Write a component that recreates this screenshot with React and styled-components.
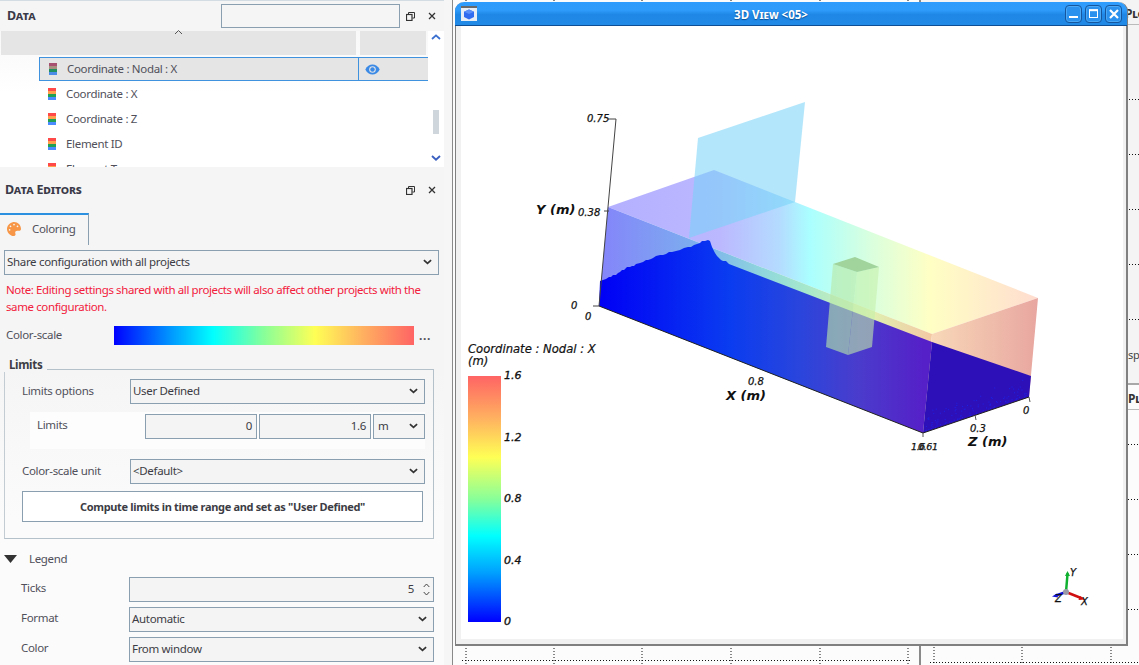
import React from "react";
import styled, { createGlobalStyle } from "styled-components";
import { FaPalette } from "react-icons/fa";

const UI = `"Noto Sans", "Liberation Sans", sans-serif`;
const VTK = `"DejaVu Sans", "Liberation Sans", sans-serif`;
const FIELD = "#8a9fb0";

const Global = createGlobalStyle`
  html, body { margin: 0; padding: 0; background: #f5f5f5; }
  * { box-sizing: border-box; }
`;

const Root = styled.div`
  position: relative;
  width: 1139px;
  height: 665px;
  overflow: hidden;
  display: flex;
  font: 11.5px/1 ${UI};
  letter-spacing: -0.32px;
  color: #3c3c44;
  background: #f6f6f6;
`;

const Dock = styled.aside`
  width: 444px;
  height: 665px;
  flex: none;
  display: flex;
  flex-direction: column;
  background: #f5f5f5;
  border-top: 1px solid #d3dbe3;
`;

const DockHead = styled.header`
  display: flex;
  align-items: center;
  height: ${(p) => p.$h}px;
  padding: ${(p) => p.$pt}px 0 0 ${(p) => p.$pl}px;
  flex: none;
`;

const DockTitle = styled.h2`
  margin: 1px 0 0;
  flex: 1;
  font: 700 12.5px/1 ${UI};
  letter-spacing: -0.2px;
  font-variant: small-caps;
  color: #3a3a48;
`;

const Search = styled.div`
  width: 179px;
  height: 24px;
  border: 1px solid ${FIELD};
  background: #f5f5f5;
`;

const HeadBtn = styled.button`
  width: 22px;
  height: 22px;
  padding: 0;
  border: 0;
  background: none;
  display: flex;
  align-items: center;
  justify-content: center;
  color: #333;
`;

const HeadBtns = styled.div`
  display: flex;
  width: 44px;
  padding-right: 1px;
`;

const TreeWrap = styled.section`
  height: 136px;
  flex: none;
  display: flex;
  background: linear-gradient(#f8f8f8, #ffffff 45%);
`;

const TreeMain = styled.div`
  width: 428px;
  height: 136px;
  clip-path: inset(-4px 0 0 0);
`;

const TreeHeader = styled.div`
  position: relative;
  display: grid;
  grid-template-columns: 355px 66px;
  gap: 4px;
  height: 24px;
  padding-left: 1px;
`;

const HeaderCell = styled.div`
  background: #e5e5e5;
`;

const SortCaret = styled.svg`
  position: absolute;
  left: 174px;
  top: -2px;
`;

const TreeRow = styled.div`
  display: flex;
  align-items: center;
  height: ${(p) => (p.$selected ? 24 : 25)}px;
  margin: ${(p) => (p.$selected ? "2px 0 0 39px" : "0 0 0 48px")};
  padding-left: ${(p) => (p.$selected ? 9 : 0)}px;
  background: ${(p) => (p.$selected ? "#e5e5e5" : "transparent")};
  border: ${(p) => (p.$selected ? "1px solid #3f93de" : "0")};
  border-right: 0;
  gap: 10px;
  color: #50505a;
`;

const RowName = styled.span`
  width: 281px;
  white-space: nowrap;
  padding-bottom: ${(p) => (p.$selected ? 1 : 0)}px;
`;

const EyeCell = styled.span`
  align-self: stretch;
  flex: 1;
  display: flex;
  align-items: center;
  padding-left: 6px;
  border-left: 1px solid #3f93de;
`;

const Stack = styled.span`
  width: 8px;
  height: 12px;
  flex: none;
  display: grid;
  grid-template-rows: repeat(4, 3px);
`;

const Stripe = styled.i`
  display: block;
  background: ${(p) => p.$c};
`;

const ScrollBar = styled.div`
  width: 16px;
  height: 136px;
  background: #fff;
  display: flex;
  flex-direction: column;
  align-items: center;
  padding-top: 3px;
`;

const ScrollThumb = styled.div`
  width: 6px;
  height: 24px;
  margin: 70px 0 21px;
  background: #cfd6dc;
`;

const TabBar = styled.div`
  display: flex;
  height: 32px;
  margin-top: 6px;
  flex: none;
`;

const Tab = styled.div`
  width: 89px;
  display: flex;
  align-items: center;
  gap: 11px;
  padding: 0 0 3px 7px;
  border-top: 2px solid #2b90e0;
  border-right: 1px solid ${FIELD};
  color: #50505a;
`;

const EditorBody = styled.div`
  flex: 1;
  padding: 5px 5px 0 4px;
  background: linear-gradient(#f5f5f5 30%, #fbfbfb 65%);
`;

const Box = styled.div`
  display: flex;
  align-items: center;
  justify-content: ${(p) => (p.$num ? "flex-end" : "space-between")};
  height: 25px;
  width: ${(p) => (p.$w ? `${p.$w}px` : "auto")};
  padding: 0 ${(p) => (p.$num ? 4 : 6)}px 2px ${(p) => p.$pl ?? 2}px;
  border: 1px solid ${FIELD};
  background: #f4f4f4;
  color: #3c3c44;
  white-space: nowrap;
`;

const Note = styled.p`
  margin: 6px 0 0 2px;
  width: 425px;
  line-height: 17px;
  letter-spacing: -0.39px;
  color: #f2203c;
`;

const ScaleRow = styled.div`
  display: grid;
  grid-template-columns: 108px 300px auto;
  align-items: center;
  margin: 11px 0 0 2px;
  height: 19px;
  color: #50505a;
`;

const Ramp = styled.div`
  height: 19px;
  background: linear-gradient(90deg, #0000ff 0%, #00a0ff 20%, #00ffff 33%, #88ff99 50%, #ffff55 67%, #ffb060 83%, #ff6464 100%);
`;

const More = styled.span`
  margin-left: 5px;
  font-weight: 700;
  font-size: 12px;
  letter-spacing: 0.6px;
  padding-top: 1px;
`;

const Group = styled.fieldset`
  position: relative;
  width: 430px;
  min-width: 0;
  margin: 24px 0 0;
  padding: 9px 8px 16px 17px;
  border: 1px solid #b4c0ca;
  border-left-color: #c4ccd3;
`;

const GroupTitle = styled.legend`
  position: absolute;
  left: -1px;
  top: -13px;
  padding: 0 5px;
  font-weight: 700;
  line-height: 15px;
  color: #3c3c44;
  background: #f5f5f5;
`;

const Row = styled.div`
  display: grid;
  grid-template-columns: ${(p) => p.$cols || "108px 295px"};
  align-items: center;
  margin-top: ${(p) => p.$mt || 0}px;
`;

const Label = styled.span`
  color: #50505a;
  padding-bottom: ${(p) => p.$lift ?? 2}px;
`;

const SubPanel = styled.div`
  display: grid;
  grid-template-columns: 106px 112px 112px 52px;
  column-gap: 2px;
  align-items: center;
  height: 37px;
  margin: 8px 0 0 8px;
  padding: 2px 0 10px 7px;
  background: #fdfdfd;
`;

const ComputeBtn = styled.button`
  display: block;
  width: 401px;
  height: 31px;
  margin-top: 7px;
  padding-bottom: 2px;
  border: 1px solid ${FIELD};
  background: #fff;
  font: 700 11px/1 ${UI};
  letter-spacing: -0.33px;
  color: #3c3c44;
`;

const LegendHead = styled.div`
  display: flex;
  align-items: center;
  gap: 12px;
  height: 16px;
  margin-top: 12px;
  color: #50505a;
`;

const LegendRows = styled.div`
  display: grid;
  row-gap: 5px;
  margin: 10px 0 0 17px;
`;

const Spin = styled.span`
  display: grid;
  row-gap: 3px;
  margin: 2px -1px 0 9px;
`;

const Workspace = styled.main`
  flex: 1;
  display: flex;
  padding-left: 8px;
  height: 665px;
`;

const PlotPane = styled.section`
  width: 469px;
  height: 665px;
  flex: none;
  background: #fcfcfc;
  border-left: 1px solid #8a8a8a;
  border-right: 2px solid #8a8a8a;
`;

const PlotColumn = styled.div`
  flex: 1;
  display: grid;
  grid-template-rows: 383px 1fr;
`;

const SidePlot = styled.section`
  position: relative;
  background: ${(p) => p.$bg};
  border-top: ${(p) => (p.$ruled ? "2px solid #a8a8a8" : "0")};
  overflow: hidden;
`;

const SideTitle = styled.div`
  height: 25px;
  padding: 8px 0 0 ${(p) => p.$pl}px;
  font: 700 12px/1 ${UI};
  font-variant: small-caps;
  color: #333;
  white-space: nowrap;
  border-bottom: 1px solid #bbb;
`;

const Grid = styled.svg`
  display: block;
`;

const GridLine = styled.line`
  stroke: #111;
  stroke-width: 1;
  stroke-dasharray: 1 2;
`;

const GridText = styled.text`
  font: 11px ${UI};
  fill: #444;
`;

const Win = styled.div`
  position: absolute;
  left: 455px;
  top: 2px;
  width: 673px;
  height: 644px;
  display: flex;
  flex-direction: column;
  border-right: 2px solid #808080;
  border-bottom: 2px solid #808080;
  border-left: 1px solid #808080;
  border-radius: 9px 9px 0 0;
  background: #f1f1f1;
`;

const TitleBar = styled.div`
  display: flex;
  align-items: center;
  flex: none;
  height: 24px;
  margin: 0 -1px;
  padding: 0 5px 0 6px;
  border-radius: 9px 9px 0 0;
  border-bottom: 1px solid #0d4e94;
  background: linear-gradient(#2e9cfc, #2f9bfb 35%, #1f88e6 55%, #2189e6);
`;

const WinTitle = styled.div`
  flex: 1;
  padding-top: 2px;
  text-align: center;
  font: 700 11.5px/1 ${UI};
  letter-spacing: 0;
  font-variant: small-caps;
  color: #fff;
  text-shadow: 0 1px 1px #0b4f96;
`;

const WinButtons = styled.div`
  display: flex;
  gap: 3px;
`;

const WinButton = styled.button`
  width: 17px;
  height: 18px;
  padding: 0;
  display: flex;
  align-items: center;
  justify-content: center;
  border: 1px solid #15569e;
  border-radius: 4px;
  background: #2a92ee;
  box-shadow: inset 0 0 0 1px #4aa8f5;
`;

const WinBody = styled.div`
  flex: 1;
  padding: 0 4px 5px 5px;
  min-height: 0;
`;

const Viewport = styled.div`
  position: relative;
  width: 662px;
  height: 613px;
  background: #fff;
  overflow: hidden;
`;

const Scene = styled.svg`
  display: block;
`;

const AxisText = styled.text`
  font-family: ${VTK};
  font-style: italic;
  font-weight: ${(p) => (p.$big ? 700 : 400)};
  font-size: ${(p) => (p.$big ? 13 : p.$tight ? 9.5 : 10)}px;
  letter-spacing: ${(p) => (p.$tight ? -0.4 : 0)}px;
  fill: #111;
  stroke: #111;
  stroke-width: ${(p) => (p.$big ? 0 : 0.25)}px;
`;

const ColorLegend = styled.div`
  position: absolute;
  left: 7px;
  top: 317px;
  font: italic 11.6px/12px ${VTK};
  letter-spacing: 0;
  color: #111;
  -webkit-text-stroke: 0.2px #111;
`;

const LegendBody = styled.div`
  display: flex;
  gap: 3px;
  margin-top: 9px;
`;

const LegendRamp = styled.div`
  width: 33px;
  height: 246px;
  background: linear-gradient(0deg, #0000ff 0%, #00a0ff 20%, #00ffff 35%, #88ff99 50%, #ffff55 67%, #ffb060 83%, #ff6464 100%);
`;

const LegendTicks = styled.div`
  height: 258px;
  margin-top: -6px;
  display: flex;
  flex-direction: column;
  justify-content: space-between;
  font-size: 11px;
  line-height: 12px;
  -webkit-text-stroke: 0.35px #111;
`;

const Chevron = ({ color = "#333", w = 9 }) => (
  <svg width={w} height="6" viewBox="0 0 10 6" fill="none">
    <path d="M1 1l4 3.6L9 1" stroke={color} strokeWidth="1.9" />
  </svg>
);

const FloatIcon = () => (
  <svg width="9" height="9" viewBox="0 0 9 9" fill="none" stroke="#333">
    <path d="M2.5 2.5V.5h6v5.5h-2" />
    <rect x=".5" y="2.5" width="5.5" height="6" strokeWidth="1.2" />
  </svg>
);

const CloseIcon = () => (
  <svg width="8" height="8" viewBox="0 0 8 8" stroke="#333" strokeWidth="1.3">
    <path d="M1 1l6 6M7 1L1 7" />
  </svg>
);

const EyeIcon = () => (
  <svg width="15" height="11" viewBox="0 0 15 11">
    <path d="M.3 5.5C2 2 4.6.6 7.5.6S13 2 14.7 5.5C13 9 10.4 10.4 7.5 10.4S2 9 .3 5.5z" fill="#3a8ae6" />
    <circle cx="7.5" cy="5.5" r="3.3" fill="#e5e5e5" />
    <circle cx="7.5" cy="5.5" r="2.2" fill="#3a8ae6" />
  </svg>
);

const COLORS = ["#ff4848", "#ffa04c", "#1fa052", "#4a8cff"];
const MUTED = ["#a85070", "#a89080", "#1f9060", "#4a8ce8"];

const ColorStack = ({ muted }) => (
  <Stack>
    {(muted ? MUTED : COLORS).map((c) => (
      <Stripe key={c} $c={c} />
    ))}
  </Stack>
);

const Select = ({ children, w, pl }) => (
  <Box $w={w} $pl={pl}>
    <span>{children}</span>
    <Chevron />
  </Box>
);

const waterEdge =
  "599,306 600,281 603,280 606,279 609,277 611,277 613,275 616,275 618,273 620,272 622,270 624,270 627,267 630,267 632,266 634,266 636,264 640,263 643,262 646,260 648,260 651,259 653,258 656,256 660,255 663,255 666,254 669,252 672,252 676,251 680,250 684,248 688,247 691,247 694,245 697,244 700,243 702,241 705,241 708,240 710,241 712,247 715,253 717,256 719,258 721,260 723,261 726,261 729,264 932,342 923,433";

const dots = (() => {
  const out = [];
  let s = 17;
  for (let i = 0; i < 110; i += 1) {
    s = (s * 1103515245 + 12345) % 2147483648;
    const t = (s % 1000) / 1000;
    s = (s * 1103515245 + 12345) % 2147483648;
    const d = (s % 1000) / 1000;
    const x = 925 + t * 103;
    const base = 433 - (x - 923) * 0.34;
    out.push([x, base - 2 - d * d * 20]);
  }
  return out;
})();

const View3D = () => (
  <Scene width="662" height="613" viewBox="461 26 662 613">
    <defs>
      <linearGradient id="top" gradientUnits="userSpaceOnUse" x1="608" x2="1038" y1="0" y2="0">
        <stop offset="0" stopColor="#b4b0ff" />
        <stop offset="0.26" stopColor="#bcb8ff" />
        <stop offset="0.4" stopColor="#b4dcff" />
        <stop offset="0.47" stopColor="#aaffff" />
        <stop offset="0.62" stopColor="#dcffdc" />
        <stop offset="0.75" stopColor="#ffffc4" />
        <stop offset="1" stopColor="#ffdcd0" />
      </linearGradient>
      <linearGradient id="wall" gradientUnits="userSpaceOnUse" x1="600" x2="932" y1="0" y2="0">
        <stop offset="0" stopColor="#8484fa" />
        <stop offset="0.3" stopColor="#7cb0ee" />
        <stop offset="0.5" stopColor="#90d8dc" />
        <stop offset="0.62" stopColor="#a6e8cc" />
        <stop offset="0.82" stopColor="#e0f0b0" />
        <stop offset="1" stopColor="#f4c8a4" />
      </linearGradient>
      <linearGradient id="water" gradientUnits="userSpaceOnUse" x1="600" x2="923" y1="0" y2="0">
        <stop offset="0" stopColor="#0000f5" />
        <stop offset="0.4" stopColor="#0a3cf0" />
        <stop offset="0.62" stopColor="#2a45dc" />
        <stop offset="0.8" stopColor="#4a3ccc" />
        <stop offset="1" stopColor="#5520c8" />
      </linearGradient>
      <linearGradient id="side" gradientUnits="userSpaceOnUse" x1="932" x2="1038" y1="0" y2="0">
        <stop offset="0" stopColor="#f8d8b8" />
        <stop offset="1" stopColor="#e8a6a0" />
      </linearGradient>
    </defs>

    <polygon points="608,207 714,170 1038,298 932,334" fill="url(#top)" />
    <polygon points="608,207 932,334 923,433 599,306" fill="url(#wall)" />
    <polygon points="932,334 1038,298 1029,397 923,433" fill="url(#side)" />
    <polygon points={waterEdge} fill="url(#water)" />
    <polygon points="932,342 1031,376 1029,397 923,433" fill="#2e10b8" />
    {dots.map(([x, y]) => (
      <rect key={`${x}-${y}`} x={x} y={y} width="1" height="1" fill="#1c22e6" />
    ))}

    <polygon points="698,138 805,102 795,202 689,238" fill="#78d2f8" fillOpacity="0.56" />

    <polygon points="833,264 857,272 848,355 826,347" fill="#b8e8a8" fillOpacity="0.62" />
    <polygon points="857,272 879,267 872,347 848,355" fill="#c4f0a8" fillOpacity="0.58" />
    <polygon points="833,264 855,257 879,267 857,272" fill="#a0d49c" />

    <g fill="none" strokeWidth="1">
      <path d="M608 119h8L599 306h-6" stroke="#444" />
      <path d="M599 306L923 433L1029 397" stroke="#222" />
      <path d="M609 211h-5" stroke="#444" />
      <path d="M1029 397l1 5M975 415l1 5M923 433v4" stroke="#555" />
    </g>

    <AxisText x="587" y="122">0.75</AxisText>
    <AxisText x="578" y="216">0.38</AxisText>
    <AxisText x="571" y="309">0</AxisText>
    <AxisText x="585" y="320">0</AxisText>
    <AxisText $big x="536" y="214">Y (m)</AxisText>
    <AxisText x="748" y="385">0.8</AxisText>
    <AxisText $big x="726" y="400">X (m)</AxisText>
    <AxisText x="970" y="432">0.3</AxisText>
    <AxisText x="1023" y="414">0</AxisText>
    <AxisText $big x="968" y="446">Z (m)</AxisText>
    <AxisText $tight x="911" y="450">1.6</AxisText>
    <AxisText $tight x="918" y="450">0.61</AxisText>

    <g strokeLinecap="round">
      <path d="M1066 592L1067.5 574" stroke="#10b030" strokeWidth="2.5" />
      <path d="M1067.5 571l-2.5 5h5z" fill="#10b030" />
      <path d="M1066 592L1081 598" stroke="#d01010" strokeWidth="2.5" />
      <path d="M1085 599.5l-5-3.5-1.5 4z" fill="#d01010" />
      <path d="M1066 592L1056 595.5" stroke="#1010d0" strokeWidth="2.5" />
      <path d="M1052 596.5l5-3 1 4z" fill="#1010d0" />
      <circle cx="1066" cy="592" r="3" fill="#9a9aa8" />
    </g>
    <AxisText x="1070" y="576">Y</AxisText>
    <AxisText x="1081" y="605">X</AxisText>
    <AxisText x="1055" y="602">Z</AxisText>
  </Scene>
);

const LEFT_V = [13, 101, 189, 278, 367, 455];
const RIGHT_V = [13, 101, 190];
const LEGEND_COLS = "108px 305px";

export default function App() {
  return (
    <Root>
      <Global />
      <Dock>
        <DockHead $h={30} $pt={0} $pl={7}>
          <DockTitle>Data</DockTitle>
          <Search />
          <HeadBtns>
            <HeadBtn aria-label="Float"><FloatIcon /></HeadBtn>
            <HeadBtn aria-label="Close"><CloseIcon /></HeadBtn>
          </HeadBtns>
        </DockHead>
        <TreeWrap>
          <TreeMain>
            <TreeHeader>
              <HeaderCell />
              <HeaderCell />
              <SortCaret width="9" height="6" viewBox="0 0 9 6" fill="none">
                <path d="M1 5l3.5-3.5L8 5" stroke="#555" />
              </SortCaret>
            </TreeHeader>
            <TreeRow $selected>
              <ColorStack muted />
              <RowName $selected>Coordinate : Nodal : X</RowName>
              <EyeCell><EyeIcon /></EyeCell>
            </TreeRow>
            <TreeRow><ColorStack /><RowName>Coordinate : X</RowName></TreeRow>
            <TreeRow><ColorStack /><RowName>Coordinate : Z</RowName></TreeRow>
            <TreeRow><ColorStack /><RowName>Element ID</RowName></TreeRow>
            <TreeRow><ColorStack /><RowName>Element Type</RowName></TreeRow>
          </TreeMain>
          <ScrollBar>
            <svg width="10" height="6" viewBox="0 0 10 6" fill="none">
              <path d="M1 5l4-3.6L9 5" stroke="#3a6fd0" strokeWidth="1.8" />
            </svg>
            <ScrollThumb />
            <Chevron color="#3a5fc0" w={10} />
          </ScrollBar>
        </TreeWrap>

        <DockHead $h={40} $pt={6} $pl={5}>
          <DockTitle>Data Editors</DockTitle>
          <HeadBtns>
            <HeadBtn aria-label="Float"><FloatIcon /></HeadBtn>
            <HeadBtn aria-label="Close"><CloseIcon /></HeadBtn>
          </HeadBtns>
        </DockHead>
        <TabBar>
          <Tab>
            <FaPalette size={14} color="#f79646" />
            <span>Coloring</span>
          </Tab>
        </TabBar>
        <EditorBody>
          <Select w={435}>Share configuration with all projects</Select>
          <Note>Note: Editing settings shared with all projects will also affect other projects with the same configuration.</Note>
          <ScaleRow>
            <Label>Color-scale</Label>
            <Ramp />
            <More>...</More>
          </ScaleRow>
          <Group>
            <GroupTitle>Limits</GroupTitle>
            <Row>
              <Label>Limits options</Label>
              <Select>User Defined</Select>
            </Row>
            <SubPanel>
              <Label $lift={4}>Limits</Label>
              <Box $num>0</Box>
              <Box $num>1.6</Box>
              <Select pl={4}>m</Select>
            </SubPanel>
            <Row $mt={10}>
              <Label>Color-scale unit</Label>
              <Select>&lt;Default&gt;</Select>
            </Row>
            <ComputeBtn>Compute limits in time range and set as "User Defined"</ComputeBtn>
          </Group>
          <LegendHead>
            <svg width="13" height="8" viewBox="0 0 13 8">
              <path d="M0 0h13L6.5 8z" fill="#333" />
            </svg>
            <span>Legend</span>
          </LegendHead>
          <LegendRows>
            <Row $cols={LEGEND_COLS}>
              <Label $lift={4}>Ticks</Label>
              <Box $num>
                5
                <Spin>
                  <svg width="7" height="5" viewBox="0 0 7 5" fill="none"><path d="M.7 4l2.8-3L6.3 4" stroke="#444" /></svg>
                  <svg width="7" height="5" viewBox="0 0 7 5" fill="none"><path d="M.7 1l2.8 3L6.3 1" stroke="#444" /></svg>
                </Spin>
              </Box>
            </Row>
            <Row $cols={LEGEND_COLS}>
              <Label $lift={4}>Format</Label>
              <Select>Automatic</Select>
            </Row>
            <Row $cols={LEGEND_COLS}>
              <Label $lift={4}>Color</Label>
              <Select>From window</Select>
            </Row>
          </LegendRows>
        </EditorBody>
      </Dock>

      <Workspace>
        <PlotPane>
          <Grid width="466" height="665" viewBox="0 0 466 665">
            {LEFT_V.map((x) => (
              <GridLine key={x} x1={x} x2={x} y1="0" y2="665" />
            ))}
            <GridLine x1="9" x2="457" y1="660.5" y2="660.5" />
          </Grid>
        </PlotPane>
        <PlotColumn>
          <SidePlot $bg="#f4f4f4">
            <SideTitle $pl={204}>Plot</SideTitle>
            <Grid width="218" height="358" viewBox="0 25 218 358">
              {[99, 154, 209, 264, 319].map((y) => (
                <GridLine key={y} x1="208" x2="218" y1={y + 0.5} y2={y + 0.5} />
              ))}
              <GridText x="207" y="359">speed</GridText>
            </Grid>
          </SidePlot>
          <SidePlot $bg="#fcfcfc" $ruled>
            <SideTitle $pl={207}>Plot</SideTitle>
            <Grid width="218" height="257" viewBox="0 408 218 257">
              {RIGHT_V.map((x) => (
                <GridLine key={x} x1={x} x2={x} y1="408" y2="665" />
              ))}
              {[442, 497, 552, 607, 660].map((y) => (
                <GridLine key={y} x1="9" x2="218" y1={y + 0.5} y2={y + 0.5} />
              ))}
            </Grid>
          </SidePlot>
        </PlotColumn>
      </Workspace>

      <Win>
        <TitleBar>
          <svg width="16" height="15" viewBox="0 0 16 15">
            <rect width="16" height="15" fill="#e8eef6" />
            <rect width="16" height="2" fill="#6a6a6a" />
            <path d="M8 3.5l5 2.2v5.3L8 13.5 3 11V5.7z" fill="#2f6cf0" />
            <path d="M8 3.5l5 2.2L8 8 3 5.7z" fill="#5a90f8" />
          </svg>
          <WinTitle>3D View &lt;05&gt;</WinTitle>
          <WinButtons>
            <WinButton aria-label="Minimize">
              <svg width="9" height="9" viewBox="0 0 9 9"><rect y="7" width="9" height="2" fill="#fff" /></svg>
            </WinButton>
            <WinButton aria-label="Maximize">
              <svg width="9" height="9" viewBox="0 0 9 9" fill="none" stroke="#fff"><rect x=".5" y="1" width="8" height="7.5" /><path d="M0 1.2h9" strokeWidth="2" /></svg>
            </WinButton>
            <WinButton aria-label="Close">
              <svg width="10" height="10" viewBox="0 0 10 10" stroke="#fff" strokeWidth="2.2"><path d="M1 1l8 8M9 1l-8 8" /></svg>
            </WinButton>
          </WinButtons>
        </TitleBar>
        <WinBody>
          <Viewport>
            <View3D />
            <ColorLegend>
              Coordinate : Nodal : X
              <br />
              (m)
              <LegendBody>
                <LegendRamp />
                <LegendTicks>
                  <span>1.6</span>
                  <span>1.2</span>
                  <span>0.8</span>
                  <span>0.4</span>
                  <span>0</span>
                </LegendTicks>
              </LegendBody>
            </ColorLegend>
          </Viewport>
        </WinBody>
      </Win>
    </Root>
  );
}
